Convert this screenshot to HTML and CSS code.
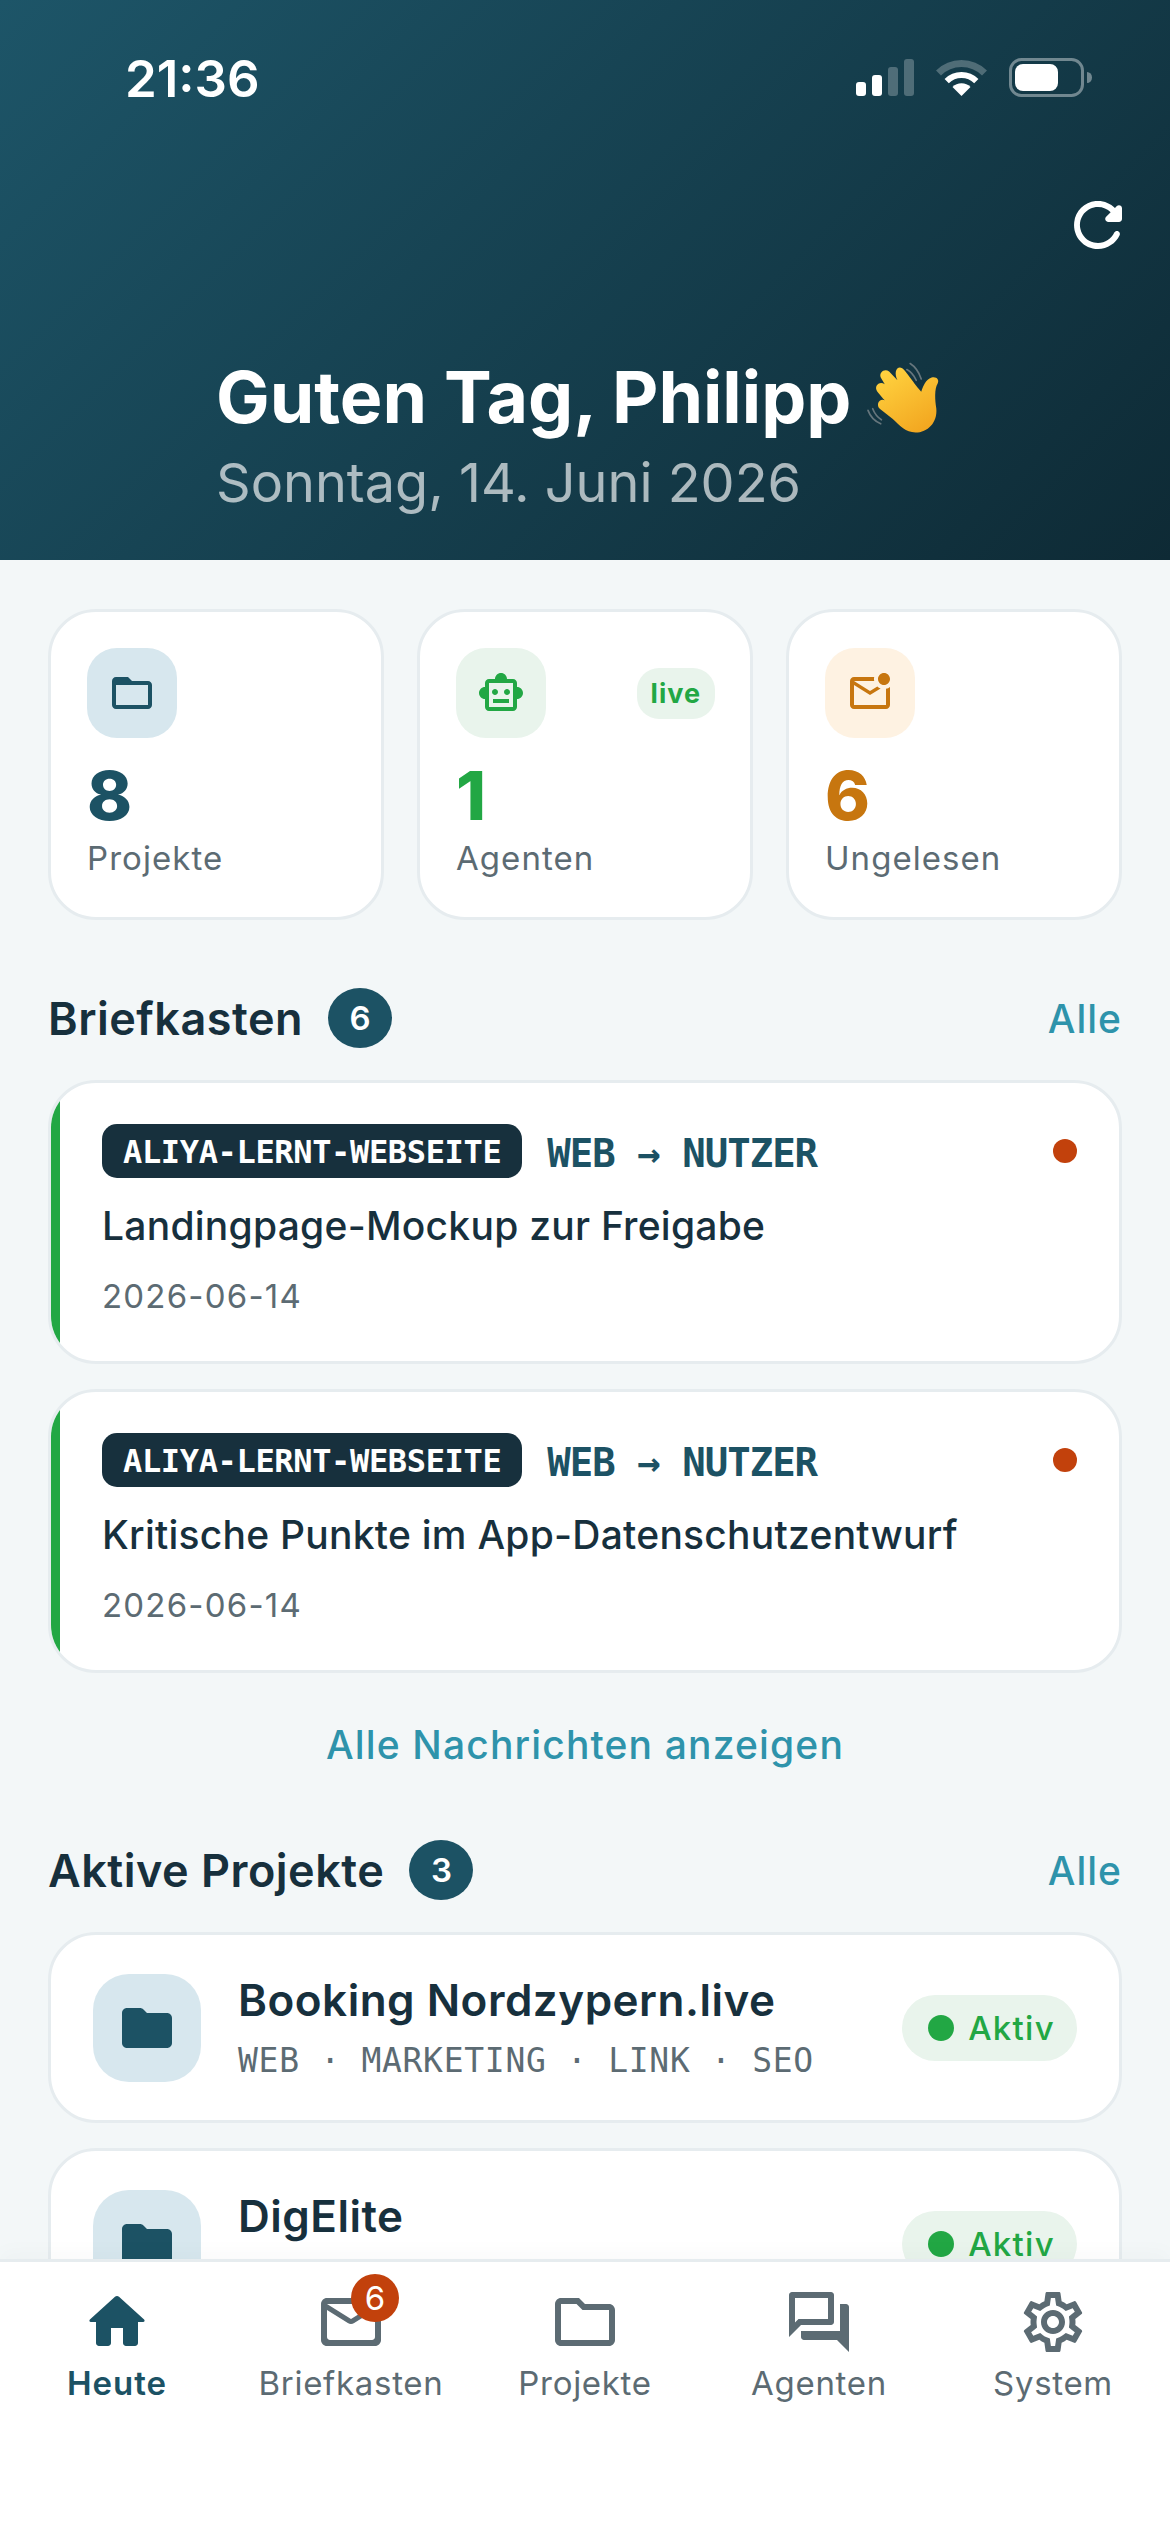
FILE: index.html
```html
<!DOCTYPE html>
<html lang="de">
<head>
    <meta charset="UTF-8">
    <meta name="viewport" content="width=device-width, initial-scale=1.0">
    <title>Heute</title>
    <link rel="stylesheet" href="styles.css">
</head>
<body>
    <div class="app">
        <div class="scroll">
            <header class="hero">
                <div class="status-bar">
                    <span class="clock">21:36</span>
                    <svg class="status-icons" width="236" height="40" viewBox="0 0 236 40">
                        <rect x="0" y="24" width="10" height="14" rx="3" fill="#fff"/>
                        <rect x="16" y="17" width="10" height="21" rx="3" fill="#fff"/>
                        <rect x="32" y="9" width="10" height="29" rx="3" fill="#fff" opacity="0.25"/>
                        <rect x="48" y="1" width="10" height="37" rx="3" fill="#fff" opacity="0.25"/>
                        <path d="M105.500 38 L96.500 29 A12.700 12.700 0 0 1 114.500 29 Z" fill="#fff"/>
                        <path d="M90.700 23.200 A21 21 0 0 1 120.300 23.200" fill="none" stroke="#fff" stroke-width="6"/>
                        <path d="M82.500 15 A32.500 32.500 0 0 1 128.500 15" fill="none" stroke="#fff" stroke-width="7" opacity="0.25"/>
                        <rect x="154.500" y="1.500" width="72" height="36" rx="11" fill="none" stroke="#fff" stroke-width="3" opacity="0.4"/>
                        <rect x="159" y="6" width="43" height="27" rx="8" fill="#fff"/>
                        <path d="M231 14 A5 5.500 0 0 1 231 25 Z" fill="#fff" opacity="0.4"/>
                    </svg>
                </div>
                <div class="hero-actions">
                    <svg class="icon-72" viewBox="0 0 24 24" fill="#fff"><path d="M17.650 6.350c-1.630-1.630-3.940-2.570-6.480-2.310-3.670.370-6.690 3.350-7.100 7.020C3.520 15.910 7.270 20 12 20c3.190 0 5.930-1.870 7.210-4.560.320-.670-.160-1.440-.900-1.440-.370 0-.720.200-.880.530-1.130 2.430-3.840 3.970-6.800 3.310-2.220-.490-4.010-2.300-4.480-4.520C5.310 9.440 8.260 6 12 6c1.660 0 3.140.690 4.220 1.780l-1.510 1.510c-.630.630-.190 1.710.700 1.710H19c.550 0 1-.450 1-1V6.410c0-.890-1.080-1.340-1.710-.710l-.640.650z"/></svg>
                </div>
                <div class="greeting">
                    <h1>Guten Tag, Philipp</h1>
                    <svg class="wave" width="77" height="74" viewBox="75 60 230 220">
                        <defs>
                            <linearGradient id="handFill" x1="0.2" y1="0" x2="0.8" y2="1">
                                <stop offset="0" stop-color="#ffd23f"/>
                                <stop offset="1" stop-color="#f2a51f"/>
                            </linearGradient>
                        </defs>
                        <g fill="none" stroke="#8a9296" stroke-width="5" stroke-linecap="round" opacity="0.7">
                            <path d="M200 88 Q218 98 228 120"/>
                            <path d="M210 70 Q232 84 243 116"/>
                            <path d="M98 205 Q106 226 124 238"/>
                            <path d="M84 210 Q94 238 122 250"/>
                        </g>
                        <path fill="url(#handFill)" d="M122 112 C116 96 134 84 147 94 L172 120 C160 96 170 76 186 84 C196 90 224 134 243 154 C250 136 256 118 274 112 C288 108 298 118 292 130 C282 146 284 180 288 204 C292 246 262 276 226 276 C196 276 180 256 158 236 L120 206 C106 194 118 172 134 180 L130 176 L112 154 C100 138 118 120 134 132 Z"/>
                    </svg>
                </div>
                <p class="today">Sonntag, 14. Juni 2026</p>
            </header>

            <main class="content">
                <section class="stats">
                    <div class="stat-card">
                        <div class="stat-top">
                            <div class="icon-box icon-box-blue">
                                <svg class="icon-48" viewBox="0 0 24 24" fill="#1c5264"><path d="M20 6h-8l-2-2H4c-1.100 0-1.990.900-1.990 2L2 18c0 1.100.900 2 2 2h16c1.100 0 2-.900 2-2V8c0-1.100-.900-2-2-2zm0 12H4V8h16v10z"/></svg>
                            </div>
                        </div>
                        <div class="stat-number blue">8</div>
                        <div class="stat-label">Projekte</div>
                    </div>
                    <div class="stat-card">
                        <div class="stat-top">
                            <div class="icon-box icon-box-green">
                                <svg class="icon-48" viewBox="0 0 24 24" fill="#22a744"><path d="M20 9V7c0-1.100-.900-2-2-2h-3c0-1.660-1.340-3-3-3S9 3.340 9 5H6c-1.100 0-2 .900-2 2v2c-1.660 0-3 1.340-3 3s1.340 3 3 3v4c0 1.100.900 2 2 2h12c1.100 0 2-.900 2-2v-4c1.660 0 3-1.340 3-3s-1.340-3-3-3zm-2 10H6V7h12v12zm-9-6c-.830 0-1.500-.670-1.500-1.500S8.170 10 9 10s1.500.670 1.500 1.500S9.830 13 9 13zm7.500-1.500c0 .830-.670 1.500-1.500 1.500s-1.500-.670-1.500-1.500.670-1.500 1.500-1.500 1.500.670 1.500 1.500zM8 15h8v2H8v-2z"/></svg>
                            </div>
                            <span class="live-pill">live</span>
                        </div>
                        <div class="stat-number green">1</div>
                        <div class="stat-label">Agenten</div>
                    </div>
                    <div class="stat-card">
                        <div class="stat-top">
                            <div class="icon-box icon-box-orange">
                                <svg class="icon-48" viewBox="0 0 24 24" fill="#c7760f"><path d="M22 8.980V18c0 1.100-.900 2-2 2H4c-1.100 0-2-.900-2-2V6c0-1.100.900-2 2-2h10.100c-.060.320-.100.660-.100 1s.040.680.100 1H4l8 5 3.670-2.290c.470.430 1.020.760 1.630.980L12 13 4 8v10h16V9.900c.740-.150 1.420-.480 2-.920zM16 5c0 1.660 1.340 3 3 3s3-1.340 3-3-1.340-3-3-3-3 1.340-3 3z"/></svg>
                            </div>
                        </div>
                        <div class="stat-number orange">6</div>
                        <div class="stat-label">Ungelesen</div>
                    </div>
                </section>

                <section class="section">
                    <div class="section-head">
                        <h2>Briefkasten</h2>
                        <span class="count">6</span>
                        <a class="all-link">Alle</a>
                    </div>
                    <div class="list">
                        <article class="message">
                            <div class="message-top">
                                <span class="tag">ALIYA-LERNT-WEBSEITE</span>
                                <span class="route">WEB → NUTZER</span>
                                <span class="unread-dot"></span>
                            </div>
                            <div class="message-title">Landingpage-Mockup zur Freigabe</div>
                            <div class="message-date">2026-06-14</div>
                        </article>
                        <article class="message">
                            <div class="message-top">
                                <span class="tag">ALIYA-LERNT-WEBSEITE</span>
                                <span class="route">WEB → NUTZER</span>
                                <span class="unread-dot"></span>
                            </div>
                            <div class="message-title">Kritische Punkte im App-Datenschutzentwurf</div>
                            <div class="message-date">2026-06-14</div>
                        </article>
                    </div>
                    <a class="show-all">Alle Nachrichten anzeigen</a>
                </section>

                <section class="section">
                    <div class="section-head">
                        <h2>Aktive Projekte</h2>
                        <span class="count">3</span>
                        <a class="all-link">Alle</a>
                    </div>
                    <div class="list">
                        <article class="project">
                            <div class="project-icon">
                                <svg class="icon-60" viewBox="0 0 24 24" fill="#1c5264"><path d="M10.590 4.590C10.210 4.210 9.700 4 9.170 4H4c-1.100 0-1.990.900-1.990 2L2 18c0 1.100.900 2 2 2h16c1.100 0 2-.900 2-2V8c0-1.100-.900-2-2-2h-8l-1.410-1.410z"/></svg>
                            </div>
                            <div class="project-text">
                                <div class="project-name">Booking Nordzypern.live</div>
                                <div class="project-tags">WEB · MARKETING · LINK · SEO</div>
                            </div>
                            <span class="state"><i></i>Aktiv</span>
                        </article>
                        <article class="project">
                            <div class="project-icon">
                                <svg class="icon-60" viewBox="0 0 24 24" fill="#1c5264"><path d="M10.590 4.590C10.210 4.210 9.700 4 9.170 4H4c-1.100 0-1.990.900-1.990 2L2 18c0 1.100.900 2 2 2h16c1.100 0 2-.900 2-2V8c0-1.100-.900-2-2-2h-8l-1.410-1.410z"/></svg>
                            </div>
                            <div class="project-text">
                                <div class="project-name">DigElite</div>
                                <div class="project-tags">&nbsp;</div>
                            </div>
                            <span class="state"><i></i>Aktiv</span>
                        </article>
                    </div>
                </section>
            </main>
        </div>

        <nav class="tabbar">
            <a class="tab tab-active">
                <svg class="icon-72" viewBox="0 0 24 24"><path d="M10 19v-5h4v5c0 .550.450 1 1 1h3c.550 0 1-.450 1-1v-7h1.700c.460 0 .680-.570.330-.870L12.670 3.600c-.380-.340-.960-.340-1.340 0l-8.360 7.530c-.340.300-.130.870.330.870H5v7c0 .550.450 1 1 1h3c.550 0 1-.450 1-1z"/></svg>
                <span>Heute</span>
            </a>
            <a class="tab">
                <div class="tab-icon">
                    <svg class="icon-72" viewBox="0 0 24 24"><path d="M20 4H4c-1.100 0-1.990.900-1.990 2L2 18c0 1.100.900 2 2 2h16c1.100 0 2-.900 2-2V6c0-1.100-.900-2-2-2zm-1 14H5c-.550 0-1-.450-1-1V8l6.940 4.340c.650.410 1.470.410 2.120 0L20 8v9c0 .550-.450 1-1 1zm-7-7L4 6h16l-8 5z"/></svg>
                    <b class="tab-badge">6</b>
                </div>
                <span>Briefkasten</span>
            </a>
            <a class="tab">
                <svg class="icon-72" viewBox="0 0 24 24"><path d="M9.170 6l2 2H20v10H4V6h5.170M10 4H4c-1.100 0-1.990.900-1.990 2L2 18c0 1.100.900 2 2 2h16c1.100 0 2-.900 2-2V8c0-1.100-.900-2-2-2h-8l-2-2z"/></svg>
                <span>Projekte</span>
            </a>
            <a class="tab">
                <svg class="icon-72" viewBox="0 0 24 24"><path d="M15 4v7H5.170L4 12.170V4h11m1-2H3c-.550 0-1 .450-1 1v14l4-4h10c.550 0 1-.450 1-1V3c0-.550-.450-1-1-1zm5 4h-2v9H6v2c0 .550.450 1 1 1h11l4 4V7c0-.550-.450-1-1-1z"/></svg>
                <span>Agenten</span>
            </a>
            <a class="tab">
                <svg class="icon-72" viewBox="0 0 24 24"><path d="M19.430 12.980c.040-.320.070-.640.070-.980 0-.340-.030-.660-.070-.980l2.110-1.650c.190-.150.240-.420.120-.640l-2-3.460c-.090-.160-.260-.250-.440-.250-.060 0-.120.010-.170.030l-2.490 1c-.520-.400-1.080-.730-1.690-.980l-.380-2.650C14.460 2.180 14.250 2 14 2h-4c-.250 0-.460.180-.490.420l-.380 2.650c-.610.250-1.170.590-1.690.980l-2.490-1c-.060-.020-.120-.030-.180-.030-.170 0-.340.090-.430.250l-2 3.460c-.130.220-.070.490.120.640l2.110 1.650c-.040.320-.070.650-.070.980 0 .330.030.660.070.980l-2.110 1.650c-.190.150-.240.420-.12.640l2 3.460c.090.160.260.250.440.250.060 0 .120-.010.170-.030l2.490-1c.520.400 1.080.730 1.690.980l.380 2.650c.030.240.240.420.490.420h4c.250 0 .460-.180.490-.42l.380-2.650c.61-.25 1.170-.59 1.690-.98l2.490 1c.06.02.12.03.18.03.17 0 .34-.09.43-.25l2-3.46c.12-.22.07-.49-.12-.64l-2.11-1.65zm-1.98-1.71c.04.31.05.52.05.73 0 .21-.02.43-.05.73l-.14 1.13.89.70 1.08.84-.70 1.21-1.27-.51-1.04-.42-.90.68c-.43.32-.84.56-1.25.73l-1.06.43-.16 1.13-.20 1.35h-1.40l-.19-1.35-.16-1.13-1.06-.43c-.43-.18-.83-.41-1.23-.71l-.91-.70-1.06.43-1.27.51-.70-1.21 1.08-.84.89-.70-.14-1.13c-.03-.31-.05-.54-.05-.74s.02-.43.05-.73l.14-1.13-.89-.70-1.08-.84.70-1.21 1.27.51 1.04.42.90-.68c.43-.32.84-.56 1.25-.73l1.06-.43.16-1.13.20-1.35h1.39l.19 1.35.16 1.13 1.06.43c.43.18.83.41 1.23.71l.91.70 1.06-.43 1.27-.51.70 1.21-1.07.85-.89.70.14 1.13zM12 8c-2.21 0-4 1.79-4 4s1.79 4 4 4 4-1.79 4-4-1.79-4-4-4zm0 6c-1.10 0-2-.90-2-2s.90-2 2-2 2 .90 2 2-.90 2-2 2z"/></svg>
                <span>System</span>
            </a>
        </nav>
    </div>
</body>
</html>
```

FILE: styles.css
```css
* {
    box-sizing: border-box;
}
body {
    margin: 0;
    font-family: Inter, "Noto Sans", sans-serif;
    background-color: #f3f7f8;
    color: #17303d;
}
h1, h2, p {
    margin: 0;
}
svg {
    display: block;
    flex-shrink: 0;
}
.icon-48 {
    width: 48px;
    height: 48px;
}
.icon-60 {
    width: 60px;
    height: 60px;
}
.icon-72 {
    width: 72px;
    height: 72px;
}
.app {
    display: flex;
    flex-direction: column;
    width: 1170px;
    height: 2532px;
    overflow: hidden;
}
.scroll {
    flex: 1;
    min-height: 0;
    overflow: hidden;
}

/* header */
.hero {
    height: 560px;
    padding: 0 36px 0 0;
    background: linear-gradient(135deg, #1d5568 0%, #0e2a35 100%);
    color: #fff;
}
.status-bar {
    display: flex;
    justify-content: space-between;
    align-items: center;
    height: 156px;
    padding: 0 42px 0 125px;
}
.clock {
    font-size: 51px;
    font-weight: 600;
}
.hero-actions {
    display: flex;
    justify-content: flex-end;
    height: 72px;
    margin-top: 33px;
}
.greeting {
    display: flex;
    align-items: center;
    gap: 14px;
    height: 90px;
    margin-top: 91px;
    padding-left: 216px;
}
.greeting h1 {
    font-size: 71.6px;
    font-weight: 700;
    line-height: 90px;
}
.today {
    padding-left: 216px;
    margin-top: 6px;
    font-size: 54px;
    line-height: 70px;
    color: rgba(255, 255, 255, 0.65);
}

/* stat cards */
.content {
    padding: 49px 48px 0;
}
.stats {
    display: grid;
    grid-template-columns: repeat(3, 1fr);
    gap: 33px;
}
.stat-card {
    padding: 36px;
    background-color: #fff;
    border: 3px solid #e6ecef;
    border-radius: 48px;
}
.stat-top {
    display: flex;
    justify-content: space-between;
    align-items: center;
}
.icon-box {
    display: flex;
    justify-content: center;
    align-items: center;
    width: 90px;
    height: 90px;
    border-radius: 30px;
}
.icon-box-blue {
    background-color: #d7e7ee;
}
.icon-box-green {
    background-color: #e9f4ec;
}
.icon-box-orange {
    background-color: #fef2e2;
}
.live-pill {
    padding: 0 14px;
    height: 51px;
    line-height: 51px;
    border-radius: 22px;
    margin-right: -1px;
    background-color: #e9f4ec;
    color: #22a744;
    font-size: 27px;
    font-weight: 700;
    letter-spacing: 1px;
}
.stat-number {
    margin-top: 18px;
    font-size: 68px;
    font-weight: 800;
    line-height: 79px;
}
.blue {
    color: #1c5264;
}
.green {
    color: #22a744;
}
.orange {
    color: #c7760f;
}
.stat-label {
    font-size: 33px;
    line-height: 46px;
    letter-spacing: 1.05px;
    color: #5c6b73;
}

/* sections */
.section {
    margin-top: 68px;
}
.section-head {
    display: flex;
    align-items: center;
    height: 60px;
    margin-bottom: 32px;
}
.section-head h2 {
    font-size: 45px;
    font-weight: 600;
    letter-spacing: 0.5px;
}
.count {
    width: 64px;
    height: 60px;
    margin-left: 25px;
    border-radius: 50%;
    background-color: #1c5264;
    color: #fff;
    font-size: 33px;
    font-weight: 600;
    line-height: 60px;
    text-align: center;
}
.all-link {
    margin-left: auto;
    color: #2e93ab;
    font-size: 39px;
    font-weight: 500;
    letter-spacing: 1px;
}
.list {
    display: flex;
    flex-direction: column;
    gap: 25px;
}

/* inbox */
.message {
    position: relative;
    overflow: hidden;
    padding: 41px 42px 41px 51px;
    background-color: #fff;
    border: 3px solid #e6ecef;
    border-radius: 48px;
}
.message::before {
    content: "";
    position: absolute;
    top: 0;
    bottom: 0;
    left: 0;
    width: 9px;
    background-color: #22a744;
}
.message-top {
    display: flex;
    align-items: center;
    height: 54px;
}
.tag {
    height: 54px;
    padding: 0 21px;
    border-radius: 15px;
    background-color: #17303d;
    color: #fff;
    font-family: "DejaVu Sans Mono", "Liberation Mono", monospace;
    font-size: 32px;
    font-weight: 700;
    letter-spacing: -0.35px;
    line-height: 57px;
}
.route {
    margin-left: 25px;
    padding-top: 5px;
    color: #1c5264;
    font-family: "DejaVu Sans Mono", "Liberation Mono", monospace;
    font-size: 39px;
    font-weight: 700;
    letter-spacing: -1px;
}
.unread-dot {
    width: 24px;
    height: 24px;
    margin-left: auto;
    border-radius: 50%;
    background-color: #c2410c;
}
.message-title {
    margin-top: 21px;
    font-size: 39px;
    font-weight: 500;
    line-height: 54px;
    letter-spacing: 0.25px;
}
.message-date {
    margin-top: 19px;
    color: #5c6b73;
    font-size: 33px;
    line-height: 48px;
    letter-spacing: 1.2px;
}
.show-all {
    display: block;
    margin-top: 45px;
    color: #2e93ab;
    font-size: 39px;
    font-weight: 500;
    line-height: 54px;
    letter-spacing: 1.15px;
    text-align: center;
}

/* projects */
.project {
    display: flex;
    align-items: center;
    gap: 37px;
    padding: 39px 42px 38px;
    background-color: #fff;
    border: 3px solid #e6ecef;
    border-radius: 48px;
}
.project-icon {
    display: flex;
    justify-content: center;
    align-items: center;
    width: 108px;
    height: 108px;
    border-radius: 36px;
    background-color: #d7e7ee;
}
.project-text {
    flex: 1;
    min-width: 0;
}
.project-name {
    font-size: 44px;
    font-weight: 600;
    line-height: 52px;
    letter-spacing: 0.5px;
}
.project-tags {
    margin-top: 14px;
    color: #5c6b73;
    font-family: "DejaVu Sans Mono", "Liberation Mono", monospace;
    font-size: 33px;
    line-height: 42px;
    letter-spacing: 0.7px;
}
.state {
    display: flex;
    align-items: center;
    gap: 14px;
    height: 66px;
    padding: 0 22px 0 26px;
    border-radius: 33px;
    background-color: #e9f4ec;
    color: #22a744;
    font-size: 33px;
    font-weight: 500;
    letter-spacing: 1.3px;
}
.state i {
    width: 26px;
    height: 26px;
    border-radius: 50%;
    background-color: #22a744;
}

/* bottom navigation */
.tabbar {
    position: relative;
    display: flex;
    height: 273px;
    padding-top: 24px;
    background-color: #fff;
    border-top: 3px solid #e6ecef;
    box-shadow: 0 -9px 18px rgba(23, 48, 61, 0.02);
}
.tab {
    display: flex;
    flex: 1;
    flex-direction: column;
    align-items: center;
    color: #5c6b73;
    fill: #5c6b73;
}
.tab span {
    font-size: 33px;
    line-height: 50px;
    letter-spacing: 0.7px;
}
.tab-active {
    color: #1c5264;
    fill: #1c5264;
}
.tab-active span {
    font-weight: 600;
    letter-spacing: 1px;
}
.tab-icon {
    position: relative;
}
.tab-badge {
    position: absolute;
    top: -12px;
    right: -12px;
    width: 48px;
    height: 48px;
    border-radius: 50%;
    background-color: #c2410c;
    color: #fff;
    font-size: 33px;
    font-weight: 400;
    line-height: 48px;
    text-align: center;
}
```
